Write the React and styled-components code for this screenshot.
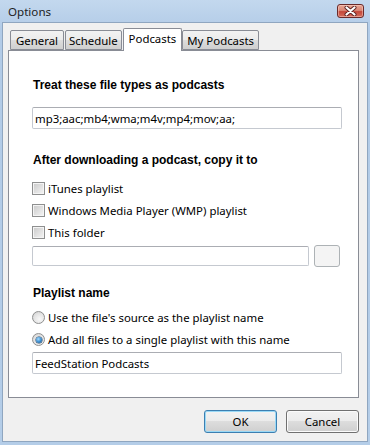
import React from 'react';
import styled, { createGlobalStyle } from 'styled-components';

const GlobalStyle = createGlobalStyle`
  html, body {
    margin: 0;
    padding: 0;
  }
  body {
    font-family: "Noto Sans", "Open Sans", sans-serif;
    font-size: 11.4px;
    color: #000;
    background: #fff;
  }
`;

const Window = styled.div`
  width: 370px;
  height: 445px;
  box-sizing: border-box;
  display: flex;
  flex-direction: column;
  padding: 0 2px 3px 2px;
  background: linear-gradient(#c3d8ee, #b2cbe7 30px, #b4cde8);
`;

const TitleBar = styled.div`
  height: 22px;
  flex-shrink: 0;
  display: flex;
  align-items: center;
  justify-content: space-between;
  padding: 0 4px 0 6px;
`;

const Title = styled.span`
  font-size: 11.6px;
  color: #1e1e1e;
`;

const CloseButton = styled.div`
  width: 27px;
  height: 14px;
  box-sizing: border-box;
  border: 1px solid #6a2a2a;
  border-radius: 3px;
  display: flex;
  align-items: center;
  justify-content: center;
  background: linear-gradient(#e9a594 0%, #d98877 45%, #c4473a 55%, #d56d5c 100%);
  box-shadow: inset 0 0 0 1px rgba(255, 220, 210, 0.45);
`;

const Client = styled.div`
  flex: 1;
  display: flex;
  flex-direction: column;
  background: #f0f0f0;
  border: 1px solid #8fa6c0;
  padding: 5px 8px 0 5px;
`;

const TabStrip = styled.div`
  height: 22px;
  display: flex;
  align-items: flex-end;
  padding-left: 2px;
  position: relative;
  z-index: 1;
`;

const Tab = styled.div`
  box-sizing: border-box;
  height: ${p => (p.$active ? '23px' : '20px')};
  margin-bottom: ${p => (p.$active ? '-1px' : '0')};
  margin-right: ${p => (p.$active ? '0' : '1px')};
  padding: 0 ${p => p.$pad}px;
  display: flex;
  align-items: ${p => (p.$active ? 'flex-start' : 'center')};
  padding-top: ${p => (p.$active ? '2px' : '0')};
  border: 1px solid #898c95;
  border-bottom: ${p => (p.$active ? 'none' : '1px solid #898c95')};
  border-radius: 2px 2px 0 0;
  background: ${p =>
    p.$active ? '#fff' : 'linear-gradient(#f2f2f2, #ebebeb 50%, #dddddd 50%, #cfcfcf)'};
  white-space: nowrap;
`;

const Panel = styled.div`
  width: 351px;
  height: 348px;
  box-sizing: border-box;
  display: flex;
  flex-direction: column;
  background: #fff;
  border: 1px solid #898c95;
  padding: 26px 16px 0 23px;
`;

const Heading = styled.div`
  font-family: "Liberation Sans", Arial, sans-serif;
  font-size: 12px;
  font-weight: 700;
  line-height: 16px;
  height: 16px;
  margin-top: ${p => p.$top || 0}px;
  padding-left: 1px;
`;

const TextBox = styled.div`
  box-sizing: border-box;
  height: ${p => p.$h || 22}px;
  width: ${p => (p.$w ? `${p.$w}px` : '100%')};
  margin-top: ${p => p.$top || 0}px;
  border: 1px solid #c5c9d0;
  border-top-color: #abadb3;
  border-radius: 2px;
  padding: 0 2px;
  display: flex;
  align-items: center;
  background: #fff;
  white-space: nowrap;
`;

const OptionList = styled.div`
  display: flex;
  flex-direction: column;
  gap: 5px;
  margin-top: ${p => p.$top || 0}px;
`;

const OptionRow = styled.label`
  height: 17px;
  display: flex;
  align-items: center;
  gap: 3px;
  white-space: nowrap;
`;

const CheckBox = styled.span`
  width: 13px;
  height: 13px;
  box-sizing: border-box;
  border: 1px solid #8e8f8f;
  background: linear-gradient(135deg, #c9c9c9, #f5f5f5);
  box-shadow: inset 0 0 0 1px #f4f4f4;
  flex-shrink: 0;
`;

const Radio = styled.span`
  width: 13px;
  height: 13px;
  box-sizing: border-box;
  border-radius: 50%;
  border: 1px solid #8e8f8f;
  background: radial-gradient(circle at 60% 65%, #f8f8f8 0%, #e6e6e6 50%, #cdcdcd 100%);
  display: flex;
  align-items: center;
  justify-content: center;
  flex-shrink: 0;
  &::after {
    content: '';
    display: ${p => (p.$checked ? 'block' : 'none')};
    width: 6px;
    height: 6px;
    border-radius: 50%;
    background: radial-gradient(circle at 40% 35%, #a6dcff 0%, #3d8fd0 50%, #14497a 100%);
    box-shadow: 0 0 0 0.5px #1c3f62;
  }
`;

const FolderRow = styled.div`
  display: flex;
  align-items: center;
  gap: 5px;
  margin-top: 4px;
`;

const BrowseButton = styled.div`
  width: 26px;
  height: 22px;
  box-sizing: border-box;
  border: 1px solid #adb2b5;
  border-radius: 3px;
  background: #f4f4f4;
`;

const ButtonRow = styled.div`
  display: flex;
  justify-content: flex-end;
  gap: 9px;
  margin-top: 12px;
`;

const Button = styled.div`
  width: 73px;
  height: 23px;
  box-sizing: border-box;
  display: flex;
  align-items: center;
  justify-content: center;
  border: 1px solid ${p => (p.$default ? '#3c7fb1' : '#707070')};
  border-radius: 3px;
  box-shadow: inset 0 0 0 1px ${p => (p.$default ? '#9ad9f6' : '#fbfbfb')};
  background: linear-gradient(#f2f2f2, #ebebeb 50%, #dddddd 50%, #cfcfcf);
`;

const CloseIcon = () => (
  <svg width="13" height="10" viewBox="0 0 13 10">
    <path d="M2.5 1.5 L10.5 8.5 M10.5 1.5 L2.5 8.5" stroke="#5a2020" strokeWidth="4" strokeLinecap="round" />
    <path d="M2.5 1.5 L10.5 8.5 M10.5 1.5 L2.5 8.5" stroke="#fff" strokeWidth="2.2" strokeLinecap="round" />
  </svg>
);

const tabs = [
  { label: 'General', pad: 5 },
  { label: 'Schedule', pad: 3 },
  { label: 'Podcasts', pad: 5, active: true },
  { label: 'My Podcasts', pad: 4 },
];

export default function App() {
  return (
    <>
      <GlobalStyle />
      <Window>
        <TitleBar>
          <Title>Options</Title>
          <CloseButton>
            <CloseIcon />
          </CloseButton>
        </TitleBar>
        <Client>
          <TabStrip>
            {tabs.map(t => (
              <Tab key={t.label} $active={t.active} $pad={t.pad}>
                {t.label}
              </Tab>
            ))}
          </TabStrip>
          <Panel>
            <Heading>Treat these file types as podcasts</Heading>
            <TextBox $top={14}>mp3;aac;mb4;wma;m4v;mp4;mov;aa;</TextBox>

            <Heading $top={23}>After downloading a podcast, copy it to</Heading>
            <OptionList $top={12}>
              <OptionRow>
                <CheckBox />
                iTunes playlist
              </OptionRow>
              <OptionRow>
                <CheckBox />
                Windows Media Player (WMP) playlist
              </OptionRow>
              <OptionRow>
                <CheckBox />
                This folder
              </OptionRow>
            </OptionList>
            <FolderRow>
              <TextBox $h={20} $w={277} />
              <BrowseButton />
            </FolderRow>

            <Heading $top={18}>Playlist name</Heading>
            <OptionList $top={8}>
              <OptionRow>
                <Radio />
                Use the file's source as the playlist name
              </OptionRow>
              <OptionRow>
                <Radio $checked />
                Add all files to a single playlist with this name
              </OptionRow>
            </OptionList>
            <TextBox $top={4}>FeedStation Podcasts</TextBox>
          </Panel>
          <ButtonRow>
            <Button $default>OK</Button>
            <Button>Cancel</Button>
          </ButtonRow>
        </Client>
      </Window>
    </>
  );
}
